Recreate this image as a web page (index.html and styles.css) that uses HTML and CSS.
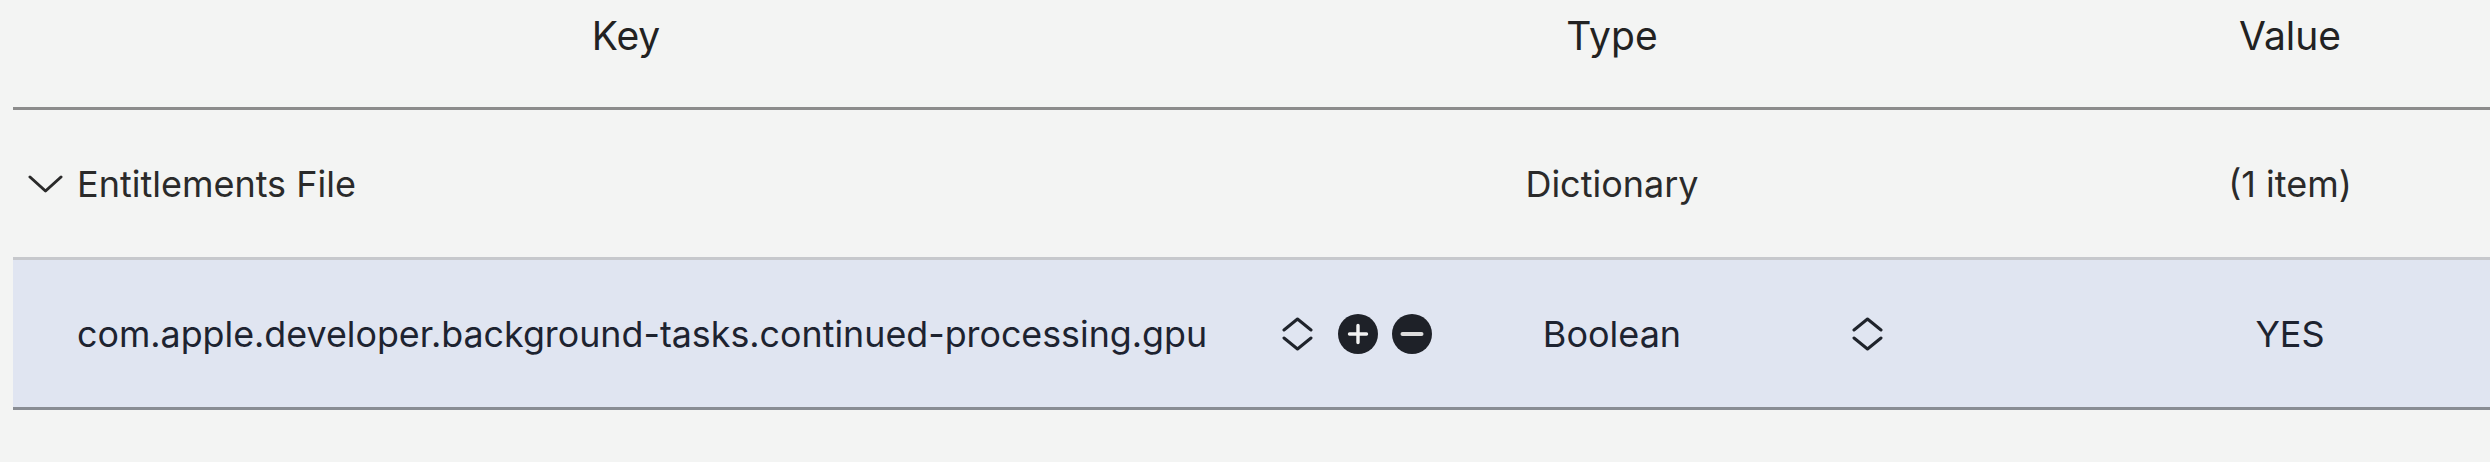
FILE: index.html
```html
<!DOCTYPE html>
<html lang="en">
<head>
<meta charset="utf-8">
<title>Entitlements</title>
<link rel="stylesheet" href="styles.css">
</head>
<body>
<div class="plist">
  <div class="grid header">
    <div class="h-key">Key</div>
    <div class="h-type">Type</div>
    <div class="h-value">Value</div>
  </div>

  <div class="grid row">
    <div class="cell key">
      <svg class="disclosure" width="35" height="18" viewBox="0 0 35 18"><polyline points="2,2 17.5,16 33,2" fill="none" stroke="#2a2a2a" stroke-width="3" stroke-linecap="round" stroke-linejoin="round"/></svg>
      <span class="label">Entitlements File</span>
    </div>
    <div class="cell type">Dictionary</div>
    <div class="cell value">(1 item)</div>
  </div>

  <div class="grid row selected">
    <div class="cell key child">
      <span class="label">com.apple.developer.background-tasks.continued-processing.gpu</span>
    </div>
    <div class="cell key-controls">
      <svg class="updown" width="31" height="34" viewBox="0 0 31 34"><polyline points="2,13 15.5,2 29,13" fill="none" stroke="#1f232b" stroke-width="3" stroke-linecap="round" stroke-linejoin="round"/><polyline points="2,21 15.5,32 29,21" fill="none" stroke="#1f232b" stroke-width="3" stroke-linecap="round" stroke-linejoin="round"/></svg>
      <svg class="round-btn plus" width="40" height="40" viewBox="0 0 40 40"><circle cx="20" cy="20" r="20" fill="#1e2128"/><path d="M20 11.5V28.5M11.5 20H28.5" stroke="#f2f2f2" stroke-width="3.4" stroke-linecap="round"/></svg>
      <svg class="round-btn minus" width="40" height="40" viewBox="0 0 40 40"><circle cx="20" cy="20" r="20" fill="#1e2128"/><path d="M10.5 20H29.5" stroke="#dcdcdc" stroke-width="4" stroke-linecap="round"/></svg>
    </div>
    <div class="cell type">Boolean</div>
    <div class="cell type-popup">
      <svg class="updown" width="31" height="34" viewBox="0 0 31 34"><polyline points="2,13 15.5,2 29,13" fill="none" stroke="#1f232b" stroke-width="3" stroke-linecap="round" stroke-linejoin="round"/><polyline points="2,21 15.5,32 29,21" fill="none" stroke="#1f232b" stroke-width="3" stroke-linecap="round" stroke-linejoin="round"/></svg>
    </div>
    <div class="cell value">YES</div>
  </div>
</div>
</body>
</html>
```

FILE: styles.css
```css
html, body {
  margin: 0;
  padding: 0;
  background: #f3f4f3;
}

body {
  font-family: "Inter", "Liberation Sans", sans-serif;
  color: #262626;
}

.plist {
  margin-left: 13px;
}

.grid {
  display: grid;
  grid-template-columns: 1249px 190px 320px 318px 1fr;
}

.header {
  height: 107px;
  border-bottom: 3px solid #8c8c8c;
  font-size: 39px;
  line-height: 48px;
  color: #222222;
  align-items: start;
}

.header > div {
  padding-top: 12px;
  text-align: center;
}

.h-key {
  grid-column: 1;
  padding-right: 23px;
}

.h-type {
  grid-column: 3;
}

.h-value {
  grid-column: 5;
}

.row {
  height: 147px;
  border-bottom: 3px solid #c6c8cc;
  font-size: 36px;
  line-height: 44px;
  color: #2a2a2a;
  align-items: center;
}

.row.selected {
  background: #e0e5f1;
  border-bottom-color: #898d94;
  color: #1d2330;
}

.cell {
  display: flex;
  align-items: center;
}

.key {
  grid-column: 1;
  padding-left: 15px;
  gap: 14px;
}

.key.child {
  padding-left: 64px;
  font-size: 35.8px;
}

.key-controls {
  grid-column: 2;
  padding-left: 20px;
  gap: 14px;
}

.key-controls .updown {
  margin-right: 11px;
}

.type {
  grid-column: 3;
  justify-content: center;
}

.type-popup {
  grid-column: 4;
  padding-left: 80px;
}

.value {
  grid-column: 5;
  justify-content: center;
}

svg {
  display: block;
  flex: none;
}
```
